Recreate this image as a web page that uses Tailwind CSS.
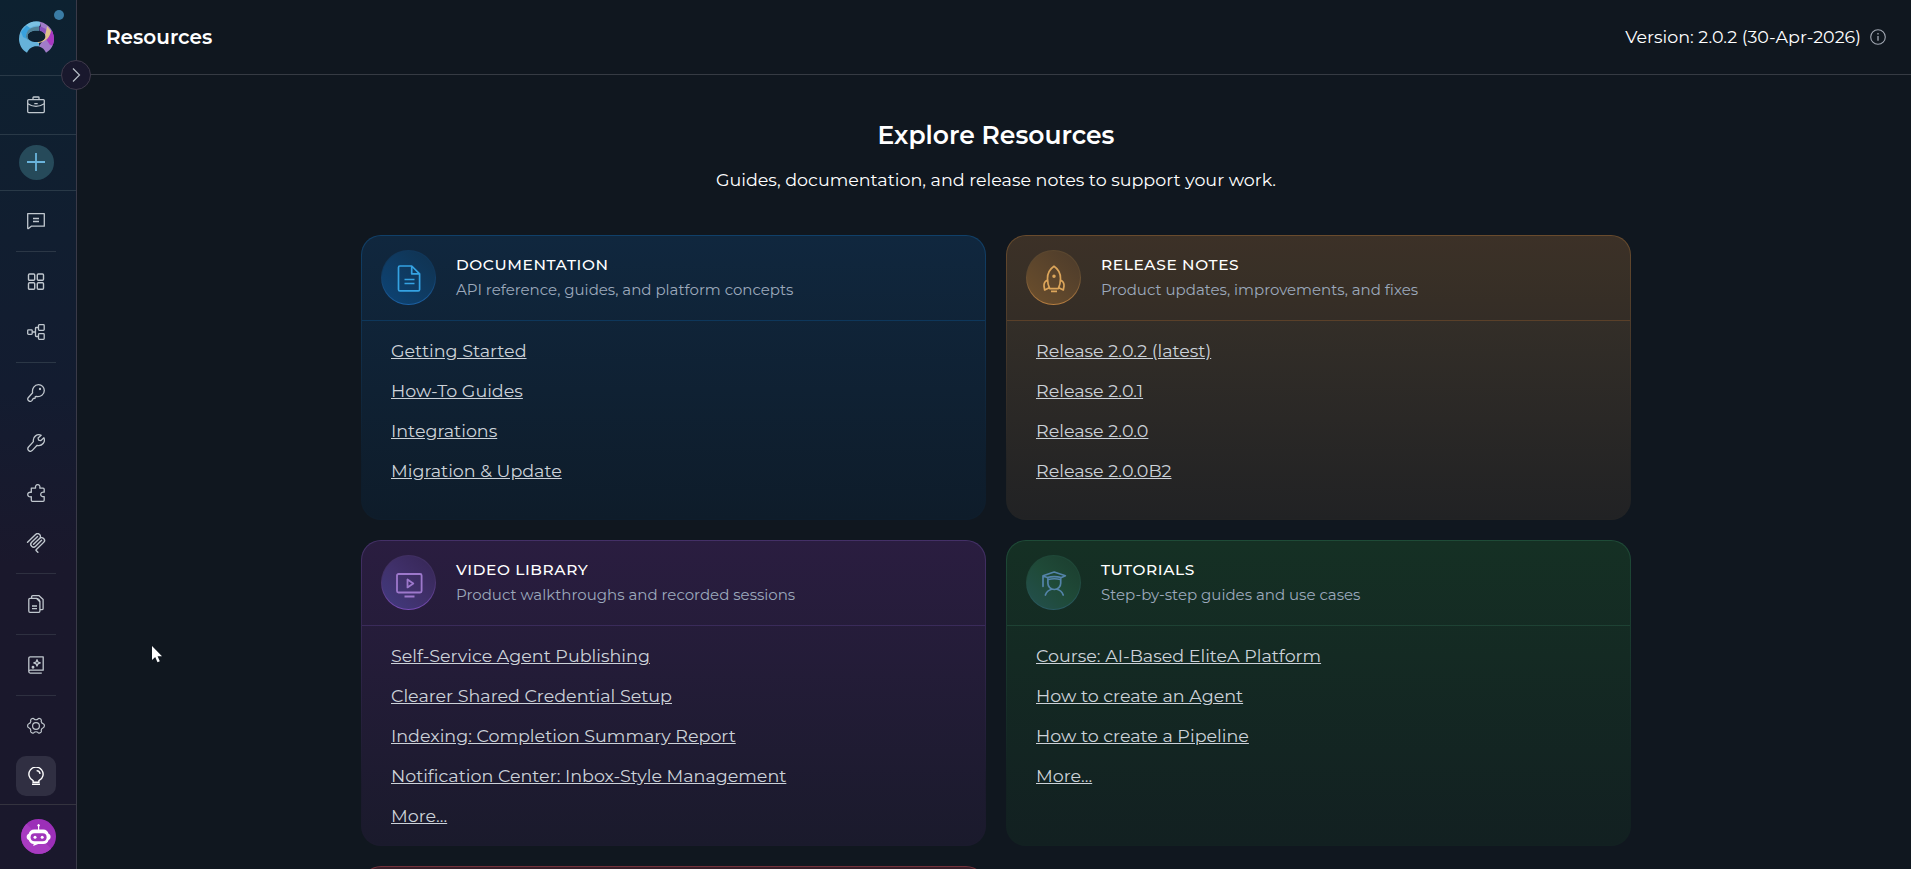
<!DOCTYPE html>
<html lang="en">
<head>
  <meta charset="UTF-8" />
  <meta name="viewport" content="width=device-width, initial-scale=1.0"/>
  <title>Resources</title>
  <script src="https://cdn.jsdelivr.net/npm/@tailwindcss/browser@4"></script>
</head>
<body class="bg-[#10171f] text-white font-[Montserrat,Inter,sans-serif] h-screen overflow-hidden flex">

<!-- Sidebar -->
<aside class="relative w-[77px] h-full shrink-0 flex flex-col border-r border-[#3a3a48] bg-linear-to-b from-[#0d2130] via-[#131c30] via-45% to-[#1a182c] to-65% text-[#c0c7ce]">
  <div class="h-[76px] shrink-0 border-b border-[#293947] pl-[19px] pt-[21px]">
    <svg class="size-[35px]" viewBox="0 0 35 35">
      <defs>
        <clipPath id="logo">
          <path clip-rule="evenodd" d="M8 31.7C3 29 0 23.500 0 18 0 8 7.800.5 17.500.5S35 8 35 18c0 5.500-3 11-8 13.700C25 27.500 22 25.200 17.500 25.200S10 27.500 8 31.700ZM17.500 9.500C12 9.500 8.500 12 8.500 15.500S12.500 21 17.500 21s9-2 9-5.500-3.500-6-9-6Z"/>
        </clipPath>
      </defs>
      <g clip-path="url(#logo)">
        <path fill="#66b2da" d="M0 0h20v35H0z"/>
        <path fill="#39a1dd" d="M2 11 9 3l3 4-5 6 1 5-4-2z"/>
        <path fill="#528398" d="M7 16c0-7 5-10.500 13-10.500V11L9 19z"/>
        <path fill="#7cc2e3" d="M7 4 14 0h7v5c-4-1-7 0-10 2z"/>
        <path fill="#a17cc8" d="M20.500 0H35v35H22l-2-10 5-7z"/>
        <path fill="#8a50bf" d="M20.500 5 27 8l-1 9-5.500-6z"/>
        <path fill="#a838c0" d="M31 10h5v15l-5-1-4-6z"/>
        <path fill="#dfc08c" d="m28 5 4 5c-1 6-5 11-13 12l-1-2c6-1 9-5 10-15Z"/>
      </g>
    </svg>
  </div>
  <span class="absolute left-[54px] top-[10px] size-[10px] rounded-full bg-[#3a7ca5]"></span>
  <button class="absolute left-[61px] top-[60px] size-[30px] rounded-full border border-[#3f3a4b] bg-[#19182d] flex items-center justify-center text-[#b7bec6]">
    <svg class="size-[16px]" viewBox="0 0 16 16" fill="none" stroke="currentColor" stroke-width="1.2"><path d="m5 1.500 6.500 6.500L5 14.500"/></svg>
  </button>

  <div class="h-[59px] shrink-0 border-b border-[#293947] pl-[27px] flex items-center">
    <svg class="size-[18px]" viewBox="0 0 18 18" fill="none" stroke="currentColor" stroke-width="1.3">
      <rect x=".7" y="3.600" width="16.600" height="13" rx="1"/>
      <path d="M6 3.500V1.600c0-.4.200-.6.600-.6h4.800c.4 0 .6.200.6.600v1.900M.8 7.800c2.500 1.600 5.500 2.600 8.200 2.600s5.700-1 8.200-2.600M7.300 7.700h3.400"/>
    </svg>
  </div>
  <div class="h-[56px] shrink-0 border-b border-[#293947] pl-[19px] flex items-center">
    <button class="size-[35px] rounded-full bg-[#264a5a] flex items-center justify-center pr-px pb-px text-[#6ab4dc]">
      <svg class="size-[18px]" viewBox="0 0 18 18" stroke="currentColor" stroke-width="1.8"><path d="M9 0v18M0 9h18"/></svg>
    </button>
  </div>

  <nav class="flex-1 flex flex-col gap-[10px] pt-[10px] pl-4">
    <a class="size-10 flex items-center justify-center">
      <svg class="size-[18px]" viewBox="0 0 18 18" fill="none" stroke="currentColor" stroke-width="1.3" stroke-linejoin="round"><path d="M.7 1.700h16.600v12.500H4.300l-2.800 2.300c-.4.300-.8.100-.8-.3zM6 6.500h6M6 9.500h6"/></svg>
    </a>
    <hr class="w-10 h-px border-0 bg-[#2b3746]" />
    <a class="size-10 flex items-center justify-center">
      <svg class="size-[18px]" viewBox="0 0 18 18" fill="none" stroke="currentColor" stroke-width="1.4">
        <rect x="1.500" y="1" width="6.200" height="6.200" rx="1"/><rect x="10.300" y="1" width="6.200" height="6.200" rx="1"/>
        <rect x="1.500" y="9.800" width="6.200" height="6.500" rx="1"/><rect x="10.300" y="9.800" width="6.200" height="6.500" rx="1"/>
      </svg>
    </a>
    <a class="size-10 flex items-center justify-center">
      <svg class="size-[18px]" viewBox="0 0 18 18" fill="none" stroke="currentColor" stroke-width="1.3">
        <rect x=".7" y="6.800" width="4.500" height="4.500" rx=".8"/><rect x="11.500" y="1.700" width="5.700" height="5.700" rx=".8"/><rect x="11.500" y="10.700" width="5.700" height="5.700" rx=".8"/>
        <path d="M5.200 9h3.300M11.500 4.500H9.300c-.5 0-.8.300-.8.800v7.400c0 .5.300.8.800.8h2.200"/>
      </svg>
    </a>
    <hr class="w-10 h-px border-0 bg-[#2b3746]" />
    <a class="size-10 flex items-center justify-center">
      <svg class="size-[18px]" viewBox="0 0 18 18" fill="none" stroke="currentColor" stroke-width="1.3" stroke-linejoin="round">
        <path d="M5.600 8.800C4.800 4.500 7.500.7 11.500.7c3.300 0 5.800 2.600 5.800 5.800 0 3.900-3.600 6.700-8 5.900l-1 .2-.3 1.700-1.800.2L4.900 16.600c-1 1-2.300 1-3.200.2-1-.9-1.200-2.300-.3-3.300z"/>
        <circle cx="13" cy="5" r=".5" fill="currentColor"/>
      </svg>
    </a>
    <a class="size-10 flex items-center justify-center">
      <svg class="size-[18px]" viewBox="0 0 18 18" fill="none" stroke="currentColor" stroke-width="1.3" stroke-linejoin="round">
        <path d="M14.200 1.300C10.300-.5 5.500 2.500 6.400 7.600L1.500 13c-2 2.500 1.200 5.700 3.600 3.600l5-5.300c5 1.300 8.700-3.500 6.800-7.500l-3.200 2.900-2.100-.5-.5-2.100z"/>
      </svg>
    </a>
    <a class="size-10 flex items-center justify-center">
      <svg class="size-[18px]" viewBox="0 0 18 18" fill="none" stroke="currentColor" stroke-width="1.3" stroke-linejoin="round">
        <path d="M4.300 4.100h4.300c-.5-1.800.3-3.400 2.100-3.400s2.600 1.600 2.100 3.400h3.300c.6 0 1.100.4 1.100 1.100v3c-1.900-.4-3.500.5-3.500 2.200s1.600 2.600 3.500 2.200v3.600c0 .6-.4 1.100-1.100 1.100H5.400c-.7 0-1.100-.4-1.100-1.100v-3.500c-1.900.5-3.600-.4-3.600-2.100s1.700-2.700 3.600-2.200z"/>
      </svg>
    </a>
    <a class="size-10 flex items-center justify-center">
      <svg class="size-[20px]" viewBox="0 0 24 24" fill="currentColor">
        <path d="M15.688 2.343a2.588 2.588 0 00-3.610 0l-9.626 9.440a.863.863 0 01-1.203 0 .823.823 0 010-1.180l9.626-9.440a4.313 4.313 0 016.016 0 4.116 4.116 0 011.204 3.540 4.300 4.300 0 013.609 1.180l.05.05a4.115 4.115 0 010 5.900l-8.706 8.537a.274.274 0 000 .393l1.788 1.754a.823.823 0 010 1.180.863.863 0 01-1.203 0l-1.788-1.753a1.920 1.920 0 010-2.754l8.706-8.538a2.470 2.470 0 000-3.540l-.05-.049a2.588 2.588 0 00-3.607-.003l-7.172 7.034-.002.002-.098.097a.863.863 0 01-1.204 0 .823.823 0 010-1.180l7.273-7.133a2.470 2.470 0 00-.003-3.537z"/>
        <path d="M14.485 4.703a.823.823 0 000-1.180.863.863 0 00-1.204 0l-7.119 6.982a4.115 4.115 0 000 5.900 4.314 4.314 0 006.016 0l7.120-6.982a.823.823 0 000-1.180.863.863 0 00-1.204 0l-7.119 6.982a2.588 2.588 0 01-3.610 0 2.470 2.470 0 010-3.540l7.120-6.982z"/>
      </svg>
    </a>
    <hr class="w-10 h-px border-0 bg-[#2e3040]" />
    <a class="size-10 flex items-center justify-center">
      <svg class="size-[18px]" viewBox="0 0 18 18" fill="none" stroke="currentColor" stroke-width="1.3" stroke-linejoin="round">
        <path d="M9.500 3.400H3c-.7 0-1.200.5-1.200 1.200v11.500c0 .7.500 1.200 1.200 1.200h8.700c.7 0 1.200-.5 1.200-1.200V6.900zM5 11h5M5 13.700h5M4.600 3.200V1.900c0-.7.500-1.200 1.200-1.200h6.300l4 3.800v9c0 .7-.5 1.200-1.200 1.200h-1.800"/>
        <path d="M9.500 3.400c1.800.2 3.200 1.600 3.400 3.500"/>
      </svg>
    </a>
    <hr class="w-10 h-px border-0 bg-[#2e3040]" />
    <a class="size-10 flex items-center justify-center">
      <svg class="size-[18px]" viewBox="0 0 18 18" fill="none" stroke="currentColor" stroke-width="1.3" stroke-linejoin="round">
        <path d="M1.800 15.500V2.200c0-.8.600-1.400 1.400-1.400h13v13.400H3.200c-.8 0-1.400.6-1.400 1.400s.6 1.500 1.400 1.500h11.600"/>
        <path d="M10 3.700l.9 2.300 2.300.9-2.300.9-.9 2.300-.9-2.300-2.300-.9 2.300-.9z"/>
        <circle cx="6" cy="11.300" r=".8" fill="currentColor"/>
      </svg>
    </a>
    <hr class="w-10 h-px border-0 bg-[#2e3040]" />
    <a class="size-10 flex items-center justify-center">
      <svg class="size-[18px]" viewBox="0 0 18 18" fill="none" stroke="currentColor" stroke-width="1.2" stroke-linejoin="round">
        <circle cx="9" cy="9" r="3.400"/>
        <path d="M5.300 1.500c.8-.3 1.500 0 2 .8.700.6 2.700.6 3.400 0 .5-.8 1.200-1.100 2-.8l1.300.8c.5.500.5 1.200.2 2 .2 1.100 1 2.200 2 2.500.8.300 1.200.9 1.200 1.700s-.4 1.900-1.200 2.200c-1 .3-1.800 1.400-2 2.500.3.800.3 1.500-.2 2l-1.300.8c-.8.300-1.500 0-2-.8-.7-.6-2.700-.6-3.400 0-.5.800-1.200 1.100-2 .8L4 15.200c-.5-.5-.5-1.200-.2-2-.2-1.100-1-2.200-2-2.500C1 10.400.6 9.800.6 9s.4-1.900 1.200-2.200c1-.3 1.800-1.400 2-2.500-.3-.8-.3-1.500.2-2z"/>
      </svg>
    </a>
    <a class="size-10 rounded-[10px] bg-[#302f42] text-white flex items-center justify-center">
      <svg class="size-[18px]" viewBox="0 0 18 18" fill="none" stroke="currentColor" stroke-width="1.4">
        <path d="M6.100 15.300v-1.600a7.100 7.100 0 1 1 5.800 0v1.600zM5 17.300h8M9.600 3.600c2 .2 3.200 1.300 3.500 3.200"/>
      </svg>
    </a>
  </nav>

  <div class="h-[65px] shrink-0 border-t border-[#34333f] pl-[21px] pt-[14px]">
    <svg class="size-[35px]" viewBox="0 0 35 35">
      <circle cx="17.500" cy="17.500" r="17.500" fill="#9c2fb8"/>
      <path fill="#a83bc1" d="M5.500 4.800 30.200 29.700A17.500 17.500 0 1 1 5.500 4.800Z"/>
      <path fill="#fff" d="M17 7.600a1.300 1.300 0 1 1 1.200 0V10.500h4c3 0 4.700 1.800 5.400 4.200 2.700.6 2.700 5.600 0 6.300-.7 2.500-2.400 4-5.400 4h-5l-5 2 .5-2c-2.600-.2-4.300-1.600-5-4-2.700-.7-2.700-5.700 0-6.300.7-2.400 2.500-4.200 5.500-4.200H17z"/>
      <rect x="9.600" y="14.300" width="16" height="8" rx="4" fill="#a135bb"/>
      <circle cx="14" cy="18.300" r="1.500" fill="#fff"/><circle cx="21.200" cy="18.300" r="1.500" fill="#fff"/>
    </svg>
  </div>
</aside>

<div class="flex-1 flex flex-col min-w-0">
  <header class="h-[75px] shrink-0 border-b border-[#363b43] pl-[29px] pr-[25px] flex items-center justify-between">
    <h1 class="text-[20px] font-semibold">Resources</h1>
    <div class="flex items-center gap-[9px]">
      <span class="text-[17.5px]">Version: 2.0.2 (30-Apr-2026)</span>
      <svg class="size-4 text-[#a2a8b3]" viewBox="0 0 16 16" fill="none" stroke="currentColor" stroke-width="1.1"><circle cx="8" cy="8" r="7.300"/><path d="M8 7v4.800M8 4v1.500" stroke-width="1.3"/></svg>
    </div>
  </header>

  <main class="flex-1 min-h-0 overflow-hidden flex flex-col items-center pt-[42px] pl-1">
    <h2 class="text-[25px] leading-9 font-semibold">Explore Resources</h2>
    <p class="mt-[15px] text-[17.5px] leading-6">Guides, documentation, and release notes to support your work.</p>

    <div class="mt-[43px] w-[1270px] grid grid-cols-2 gap-5">

      <!-- Documentation -->
      <section class="rounded-[20px] p-px bg-linear-to-b from-[#104069] to-[#0e1d2c] to-80%">
        <div class="h-[283px] rounded-[19px] bg-linear-to-b from-[#10273e] to-[#0e1c2a]">
          <div class="h-[85px] border-b border-[#0e375b] pl-[19px] pb-px flex items-center">
            <div class="size-[55px] rounded-full p-px bg-linear-to-b from-[#10375b] from-40% to-[#1c62a6]">
              <div class="size-full rounded-full bg-linear-to-tr from-[#0c4476] to-[#10324f] flex items-center justify-center text-[#35a3e3]">
                <svg class="size-7 overflow-visible" viewBox="0 0 28 28" fill="none" stroke="currentColor" stroke-width="1.7" stroke-linejoin="round"><path d="M16.700 2H4.900c-.8 0-1.400.6-1.400 1.400v22c0 .8.600 1.400 1.400 1.400h18.300c.8 0 1.400-.6 1.400-1.400V9.800zM16.700 2v7.800h7.900M9.500 15.500h10M9.500 19.500h10"/></svg>
              </div>
            </div>
            <div class="ml-5 pb-px">
              <h3 class="text-[15.4px] leading-[25px] font-medium tracking-[0.6px]">DOCUMENTATION</h3>
              <p class="text-[15px] leading-[25px] text-[#9ca9bc]">API reference, guides, and platform concepts</p>
            </div>
          </div>
          <ul class="pt-[10px] pl-[29px] text-[17.5px] leading-10 text-[#ccd2d9]">
            <li><a href="#" class="underline">Getting Started</a></li>
            <li><a href="#" class="underline">How-To Guides</a></li>
            <li><a href="#" class="underline">Integrations</a></li>
            <li><a href="#" class="underline">Migration &amp; Update</a></li>
          </ul>
        </div>
      </section>

      <!-- Release notes -->
      <section class="rounded-[20px] p-px bg-linear-to-b from-[#694b2d] to-[#222324] to-80%">
        <div class="h-[283px] rounded-[19px] bg-linear-to-b from-[#3b3329] to-[#212224]">
          <div class="h-[85px] border-b border-[#5a4029] bg-[#402c1e]/10 rounded-t-[19px] pl-[19px] pb-px flex items-center">
            <div class="size-[55px] rounded-full p-px bg-linear-to-b from-[#5b472f] from-40% to-[#b97f40]">
              <div class="size-full rounded-full bg-linear-to-tr from-[#6c4f2c] to-[#4c3b2b] flex items-center justify-center text-[#dca55a]">
                <svg class="size-7 overflow-visible" viewBox="0 0 28 28" fill="none" stroke="currentColor" stroke-width="1.7" stroke-linejoin="round">
                  <path d="M14 2.300C10 5 7.500 9.300 7.500 14.500c0 3.600.7 7 2.200 10.200h8.600c1.500-3.200 2.200-6.600 2.200-10.200 0-5.200-2.500-9.500-6.500-12.200ZM7.500 16c-2.400 1.200-3.700 3.300-3.500 6l.7 4 4.500-2.300M20.500 16c2.400 1.200 3.700 3.300 3.500 6l-.7 4-4.500-2.300M11 27.300h6"/>
                  <circle cx="14" cy="12.200" r=".9" fill="currentColor"/>
                </svg>
              </div>
            </div>
            <div class="ml-5 pb-px">
              <h3 class="text-[15.4px] leading-[25px] font-medium tracking-[0.6px]">RELEASE NOTES</h3>
              <p class="text-[15px] leading-[25px] text-[#9ca9bc]">Product updates, improvements, and fixes</p>
            </div>
          </div>
          <ul class="pt-[10px] pl-[29px] text-[17.5px] leading-10 text-[#ccd2d9]">
            <li><a href="#" class="underline">Release 2.0.2 (latest)</a></li>
            <li><a href="#" class="underline">Release 2.0.1</a></li>
            <li><a href="#" class="underline">Release 2.0.0</a></li>
            <li><a href="#" class="underline">Release 2.0.0B2</a></li>
          </ul>
        </div>
      </section>

      <!-- Video library -->
      <section class="rounded-[20px] p-px bg-linear-to-b from-[#443067] to-[#1b1a2d] to-80%">
        <div class="h-[304px] rounded-[19px] bg-linear-to-b from-[#2a1d40] to-[#1a1a2c]">
          <div class="h-[85px] border-b border-[#3a2b5a] pl-[19px] pb-px flex items-center">
            <div class="size-[55px] rounded-full p-px bg-linear-to-b from-[#402f62] from-40% to-[#7a4db8]">
              <div class="size-full rounded-full bg-linear-to-tr from-[#413b80] via-[#40306a] to-[#362655] flex items-center justify-center text-[#9d78cc]">
                <svg class="size-7 overflow-visible" viewBox="0 0 28 28" fill="none" stroke="currentColor" stroke-width="1.8" stroke-linejoin="round"><rect x="2" y="5" width="24.600" height="18.500" rx="1.500"/><path d="M12.500 10.400v8l5.800-4zM9.500 27.500h10"/></svg>
              </div>
            </div>
            <div class="ml-5 pb-px">
              <h3 class="text-[15.4px] leading-[25px] font-medium tracking-[0.6px]">VIDEO LIBRARY</h3>
              <p class="text-[15px] leading-[25px] text-[#9ca9bc]">Product walkthroughs and recorded sessions</p>
            </div>
          </div>
          <ul class="pt-[10px] pl-[29px] text-[17.5px] leading-10 text-[#ccd2d9]">
            <li><a href="#" class="underline">Self-Service Agent Publishing</a></li>
            <li><a href="#" class="underline">Clearer Shared Credential Setup</a></li>
            <li><a href="#" class="underline">Indexing: Completion Summary Report</a></li>
            <li><a href="#" class="underline">Notification Center: Inbox-Style Management</a></li>
            <li><a href="#" class="underline">More...</a></li>
          </ul>
        </div>
      </section>

      <!-- Tutorials -->
      <section class="rounded-[20px] p-px bg-linear-to-b from-[#1e4b37] to-[#122121] to-80%">
        <div class="h-[304px] rounded-[19px] bg-linear-to-b from-[#153024] to-[#122021]">
          <div class="h-[85px] border-b border-[#1e4234] pl-[19px] pb-px flex items-center">
            <div class="size-[55px] rounded-full p-px bg-linear-to-b from-[#1f4838] from-40% to-[#2a5a63]">
              <div class="size-full rounded-full bg-linear-to-tr from-[#24504f] via-[#1f4a38] to-[#1b3d2e] flex items-center justify-center text-[#5484aa]">
                <svg class="size-7 overflow-visible" viewBox="0 0 28 28" fill="none" stroke="currentColor" stroke-width="1.7" stroke-linejoin="round" stroke-linecap="round"><path d="M3 6.800 14.200 3l11.200 3.800-4 1.700c-4.500-1-9.900-1-14.400 0zM3 6.800v10.500M7.900 8.700v5.500c0 3.500 2.700 6.300 6.400 6.300s6.400-2.800 6.400-6.300V8.700M8.200 10.500c4-1 8.200-1 12.200 0M5.400 26c1-2.800 3.300-4.900 6.200-5.700M23.200 26c-1-2.800-3.300-4.900-6.200-5.700"/></svg>
              </div>
            </div>
            <div class="ml-5 pb-px">
              <h3 class="text-[15.4px] leading-[25px] font-medium tracking-[0.6px]">TUTORIALS</h3>
              <p class="text-[15px] leading-[25px] text-[#9ca9bc]">Step-by-step guides and use cases</p>
            </div>
          </div>
          <ul class="pt-[10px] pl-[29px] text-[17.5px] leading-10 text-[#ccd2d9]">
            <li><a href="#" class="underline">Course: AI-Based EliteA Platform</a></li>
            <li><a href="#" class="underline">How to create an Agent</a></li>
            <li><a href="#" class="underline">How to create a Pipeline</a></li>
            <li><a href="#" class="underline">More...</a></li>
          </ul>
        </div>
      </section>

      <!-- Next card, only its top edge is in view -->
      <section class="rounded-[20px] p-px bg-linear-to-b from-[#74323b] to-[#22181f]">
        <div class="h-[283px] rounded-[19px] bg-linear-to-b from-[#371f29] to-[#1d1a22]"></div>
      </section>
    </div>
  </main>
</div>

<!-- Mouse pointer -->
<svg class="absolute left-[151px] top-[645px] w-[12px] h-[18px]" viewBox="0 0 12 18"><path fill="#fff" d="M1 1v14l3.200-3 2.300 5.200 2.300-1-2.200-5H11z"/></svg>

</body>
</html>
